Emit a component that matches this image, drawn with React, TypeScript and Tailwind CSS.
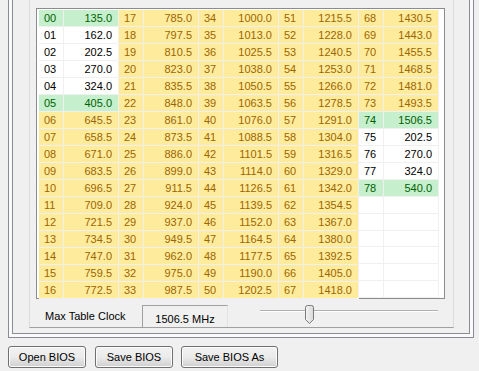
import React from 'react';

type Kind = 'green' | 'white' | 'yellow' | 'empty';

interface Entry {
  idx: string;
  value: string;
  kind: Kind;
}

const values = [
  '135.0', '162.0', '202.5', '270.0', '324.0', '405.0', '645.5', '658.5', '671.0', '683.5', '696.5', '709.0', '721.5', '734.5', '747.0', '759.5', '772.5',
  '785.0', '797.5', '810.5', '823.0', '835.5', '848.0', '861.0', '873.5', '886.0', '899.0', '911.5', '924.0', '937.0', '949.5', '962.0', '975.0', '987.5',
  '1000.0', '1013.0', '1025.5', '1038.0', '1050.5', '1063.5', '1076.0', '1088.5', '1101.5', '1114.0', '1126.5', '1139.5', '1152.0', '1164.5', '1177.5', '1190.0', '1202.5',
  '1215.5', '1228.0', '1240.5', '1253.0', '1266.0', '1278.5', '1291.0', '1304.0', '1316.5', '1329.0', '1342.0', '1354.5', '1367.0', '1380.0', '1392.5', '1405.0', '1418.0',
  '1430.5', '1443.0', '1455.5', '1468.5', '1481.0', '1493.5', '1506.5', '202.5', '270.0', '324.0', '540.0',
];

const greens = [0, 5, 74, 78];
const whites = [1, 2, 3, 4, 75, 76, 77];

const entries: Entry[] = Array.from({ length: 85 }, (_, i) => {
  if (i >= values.length) return { idx: '', value: '', kind: 'empty' };
  const kind: Kind = greens.includes(i) ? 'green' : whites.includes(i) ? 'white' : 'yellow';
  return { idx: String(i).padStart(2, '0'), value: values[i], kind };
});

const cellColor: Record<Kind, string> = {
  green: 'bg-[#c6efce] text-[#006100]',
  white: 'bg-white text-black',
  yellow: 'bg-[#ffeb9c] text-[#9c6500]',
  empty: 'bg-white',
};

const Cell: React.FC<{ entry: Entry }> = ({ entry }) => (
  <div className={`flex h-[17px] ${cellColor[entry.kind]}`}>
    <div className="w-[25px] border-r border-b border-[#f0f0f0] pl-[5px] leading-[16px]">{entry.idx}</div>
    <div className="w-[55px] border-r border-b border-[#f0f0f0] pr-[6px] text-right leading-[16px]">{entry.value}</div>
  </div>
);

const Button: React.FC<{ label: string; width: string }> = ({ label, width }) => (
  <button
    className={`${width} h-[22px] rounded-[3px] border border-[#707070] bg-gradient-to-b from-[#f2f2f2] via-[#ebebeb] to-[#cfcfcf] text-[11px] text-black shadow-[inset_0_0_0_1px_#fcfcfc]`}
  >
    {label}
  </button>
);

const SliderThumb: React.FC = () => (
  <svg width="11" height="19" viewBox="0 0 11 19" className="absolute left-[46px] top-0">
    <defs>
      <linearGradient id="thumb" x1="0" y1="0" x2="1" y2="0">
        <stop offset="0" stopColor="#f4f4f4" />
        <stop offset="1" stopColor="#d8d8d8" />
      </linearGradient>
    </defs>
    <path d="M1.5 2.5 Q1.5 0.5 3.5 0.5 H7.5 Q9.5 0.5 9.5 2.5 V14.5 L5.5 18.5 L1.5 14.5 Z" fill="url(#thumb)" stroke="#7a7a7a" />
  </svg>
);

const App: React.FC = () => {
  const columns = [0, 1, 2, 3, 4].map((c) => entries.slice(c * 17, c * 17 + 17));

  return (
    <div className="w-[479px] h-[371px] overflow-hidden bg-[#f0f0f0] font-['Liberation_Sans',Arial,sans-serif] text-[11px]">
      {/* Tab frame */}
      <div className="ml-[8px] w-[466px] h-[338px] border-x border-b border-[#898c95] bg-[#fafafa] px-[3px] pb-[3px]">
        <div className="h-full border-x border-b border-[#898c95] bg-[#f0f0f0]">
          {/* Panel */}
          <div className="ml-[16px] w-[425px] h-[328px] overflow-hidden border-l border-r border-b border-[#a0a0a0] border-l-[#dcdcdc] border-r-[#dcdcdc]">
            <div className="ml-[6px] mt-[8px] w-[409px] h-[291px] border border-[#8c8c8c] bg-white pl-[2px] pt-[1px] flex">
              {columns.map((col, c) => (
                <div key={c} className="flex flex-col">
                  {col.map((e, r) => (
                    <Cell key={r} entry={e} />
                  ))}
                </div>
              ))}
            </div>

            <div className="flex items-start mt-[6px]">
              <div className="ml-[15px] mt-[4px] w-[97px] leading-[14px] text-black">Max Table Clock</div>
              <div className="w-[86px] h-[26px] border-t border-l border-r border-[#a0a0a0] border-r-[#e3e3e3] pt-[5px] text-center text-black">
                1506.5 MHz
              </div>
              <div className="relative ml-[30px] w-[182px] h-[20px]">
                <div className="absolute left-[2px] right-[2px] top-[5px] h-[2px] border-t border-[#b0b0b0] border-b border-b-white" />
                <SliderThumb />
              </div>
            </div>
          </div>
        </div>
      </div>

      <div className="flex mt-[8px] ml-[8px]">
        <Button label="Open BIOS" width="w-[78px]" />
        <div className="ml-[9px]">
          <Button label="Save BIOS" width="w-[78px]" />
        </div>
        <div className="ml-[8px]">
          <Button label="Save BIOS As" width="w-[97px]" />
        </div>
      </div>
    </div>
  );
};

export default App;
